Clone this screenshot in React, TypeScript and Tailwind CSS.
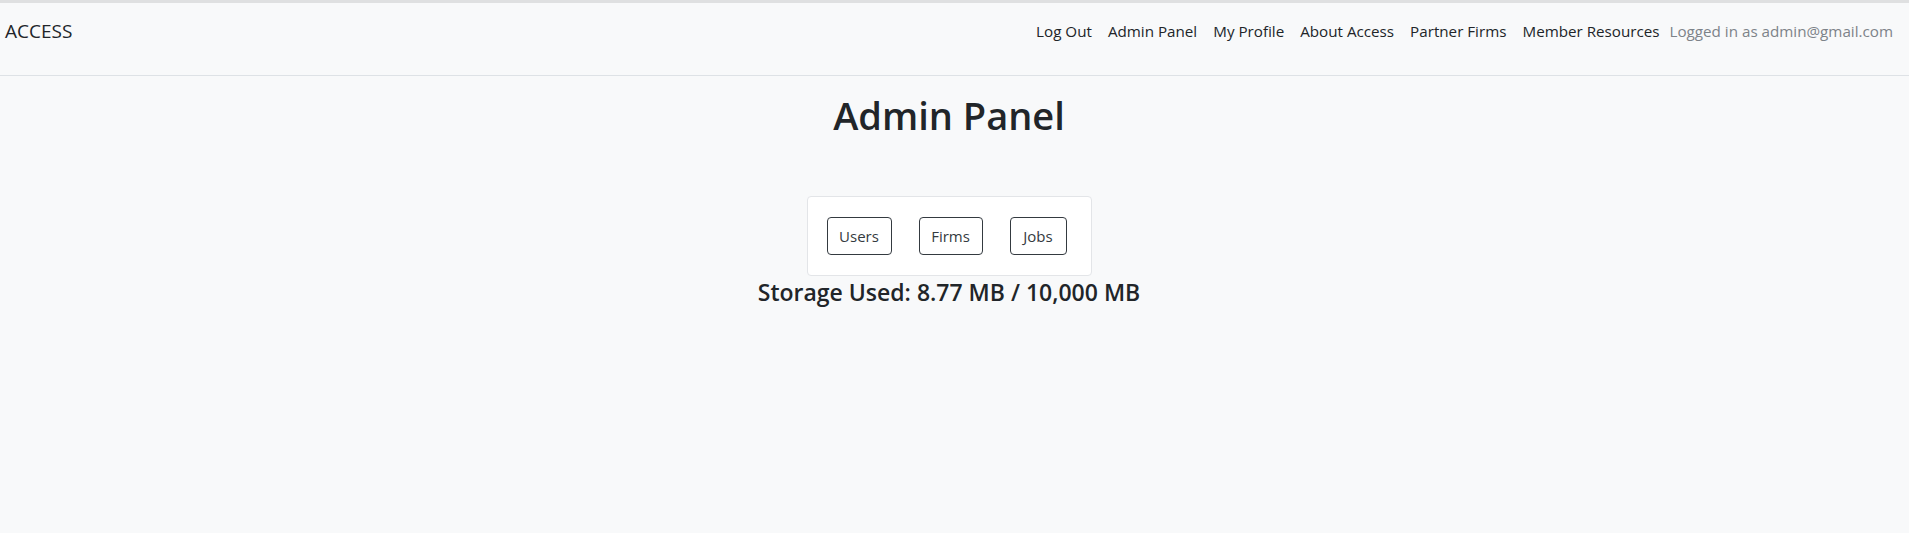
export default function App() {
  const links = ["Log Out", "Admin Panel", "My Profile", "About Access", "Partner Firms", "Member Resources"];
  const buttons = [
    { label: "Users", w: "w-[65px]" },
    { label: "Firms", w: "w-[64px]" },
    { label: "Jobs", w: "w-[57px]" },
  ];

  return (
    <div className="min-h-[533px] bg-[#f8f9fa] text-[#212529] font-['Open_Sans',sans-serif] border-t-[3px] border-[#dfe0e1]">
      <nav className="h-[73px] border-b border-[#dee2e6] flex items-start justify-between pl-[5px] pr-[16px] pt-[14px]">
        <a className="text-[19px] leading-[28px] text-[#212529]">ACCESS</a>
        <div className="flex items-center text-[15.2px] leading-[28px]">
          {links.map((l) => (
            <a key={l} className="px-[8px] text-[#212529] whitespace-nowrap">
              {l}
            </a>
          ))}
          <span className="pl-[2px] text-[#7d8389] whitespace-nowrap">Logged in as admin@gmail.com</span>
        </div>
      </nav>

      <main className="flex flex-col items-center pr-[11px]">
        <h1 className="mt-[16px] text-[38px] leading-[46px] font-semibold">Admin Panel</h1>
        <div className="mt-[58px] bg-white border border-[#e3e5e8] rounded-[4px] flex gap-[27px] pl-[19px] pr-[24px] py-[20px]">
          {buttons.map((b) => (
            <button
              key={b.label}
              type="button"
              className={`${b.w} h-[38px] flex items-center justify-center border border-[#343a40] rounded-[4px] text-[15px] text-[#343a40] bg-transparent`}
            >
              {b.label}
            </button>
          ))}
        </div>
        <h4 className="mt-[2px] text-[23px] leading-[28px] font-semibold">Storage Used: 8.77 MB / 10,000 MB</h4>
      </main>
    </div>
  );
}
